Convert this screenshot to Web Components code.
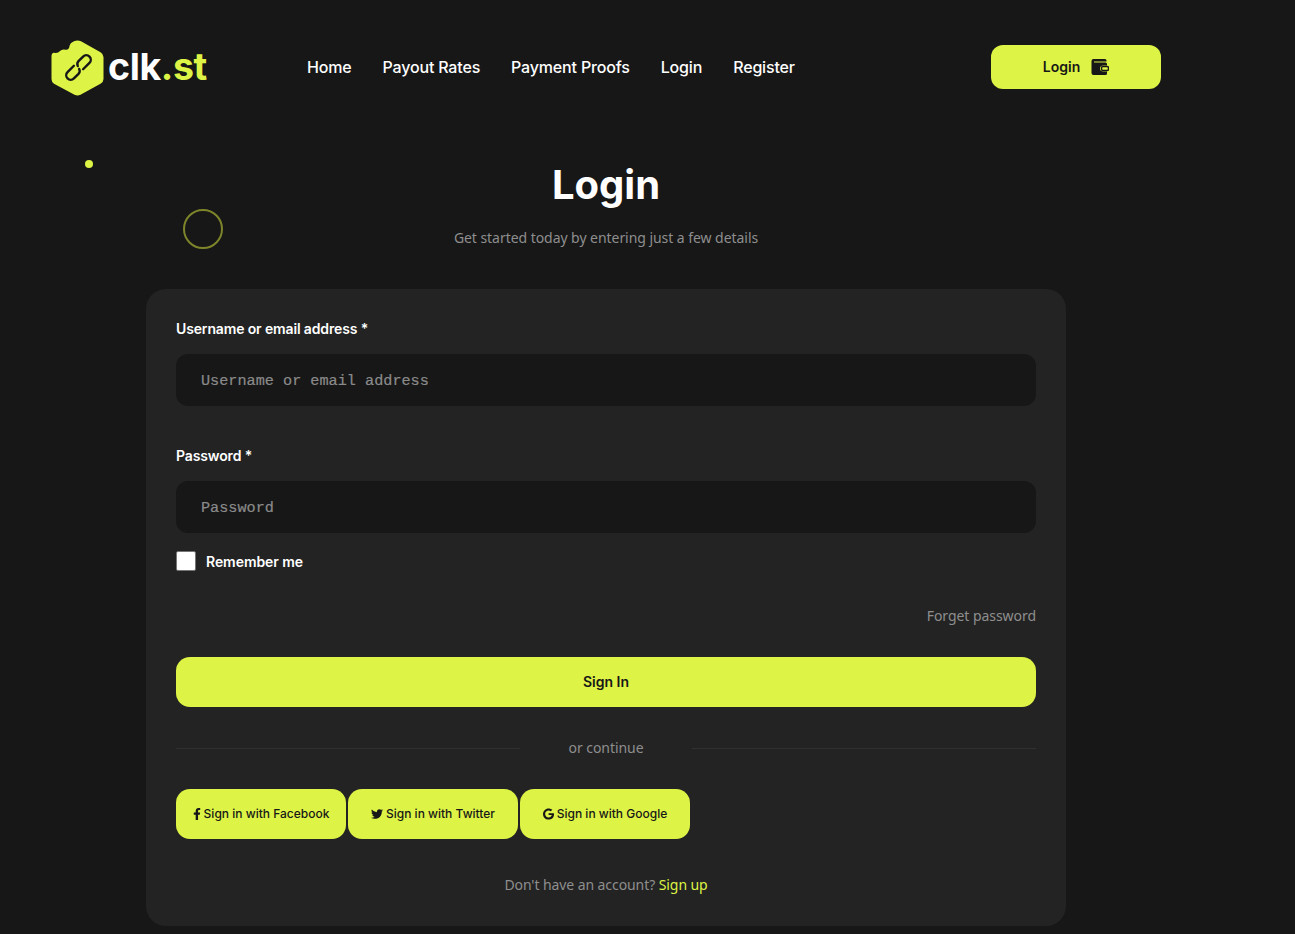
<!DOCTYPE html>
<html lang="en"><head><meta charset="utf-8"><title>Login</title>
<style>
html,body{margin:0;padding:0;background:#171717;}
body{font-family:"Inter","Noto Sans",sans-serif;color:#fff;}
</style></head>
<body>
<login-page></login-page>
<template id="t-page">
<style>
:host{display:block;position:relative;width:1212px;min-height:934px;}
.hero{display:flex;flex-direction:column;align-items:center;padding-top:24px;}
h1{margin:0;font:700 40px/54px "Inter",sans-serif;color:#fff;}
p{margin:0;padding-top:15px;font:14px/22px "Noto Sans",sans-serif;letter-spacing:-.05px;color:#8e8e8e;}
.dot{position:absolute;left:85px;top:160px;width:8px;height:8px;border-radius:50%;background:#ddf345;}
.ring{position:absolute;left:183px;top:209px;width:36px;height:36px;border:2px solid #7d8429;border-radius:50%;}
login-card{margin:40px 0 0 146px;}
</style>
<site-header></site-header>
<div class="dot"></div><div class="ring"></div>
<div class="hero"><h1>Login</h1><p>Get started today by entering just a few details</p></div>
<login-card></login-card>
</template>
<template id="t-header">
<style>
:host{display:flex;align-items:center;height:134px;box-sizing:border-box;padding:0 51px;}
.logo{display:flex;align-items:center;gap:4px;width:256px;flex:none;}
svg.mark{width:53px;height:56px;display:block;flex:none;margin-top:2px;}
.word{font:700 37.500px/56px "Inter",sans-serif;letter-spacing:-.4px;color:#fff;}
.word b{color:#ddf345;font-weight:700;}
nav{display:flex;gap:31px;flex:1;}
a{font:500 16px/22px "Inter",sans-serif;color:#fff;text-decoration:none;letter-spacing:-.17px;}
.btn{display:flex;align-items:center;justify-content:center;gap:11px;width:170px;height:44px;border-radius:12px;background:#ddf345;color:#171717;font:600 14px/20px "Inter",sans-serif;flex:none;}
.btn svg{width:18px;height:17px;display:block;}
</style>
<div class="logo">
<svg class="mark" viewBox="0 0 53 56"><path fill="#ddf345" d="M23 1.200Q26.500-.4 30 1.200L49.500 12.200Q52.500 14 52.500 17V39Q52.500 42 49.500 43.800L29.500 54.800Q26.500 56.200 23.500 54.800L3 43.800Q.5 42.300.5 39V16Q.5 13 3 12.800Q7 13.500 9 11Q11 8.800 15 9.800Q18 10 18.500 6Q19 3 23 1.200Z"/>
<g fill="none" stroke="#171717" stroke-width="2.400" stroke-linecap="round" transform="rotate(-45 27.500 27.500)"><path d="M25.500 23H16.500A4.500 4.500 0 0 0 16.500 32H23A4.500 4.500 0 0 0 27 29"/><path d="M29.500 32H38.500A4.500 4.500 0 0 0 38.500 23H32A4.500 4.500 0 0 0 28 26"/></g></svg>
<div class="word">clk<b>.st</b></div>
</div>
<nav><a>Home</a><a>Payout Rates</a><a>Payment Proofs</a><a>Login</a><a>Register</a></nav>
<div class="btn"><span>Login</span><svg viewBox="0 0 18 17"><path fill="#171717" d="M2.500 0H14Q15.500 0 15.500 1.500V2.500H3V3.500H14.500Q16 3.500 16 5V6.500H12.500Q9 6.500 9 9.500Q9 12.500 12.500 12.500H16V14.500Q16 16 14.500 16H2.500Q.5 16 .5 14V2Q.5 0 2.500 0Z"/><rect x="10.500" y="7.500" width="7" height="4" rx="1.500" fill="none" stroke="#171717" stroke-width="1.400"/></svg></div>
</template>
<template id="t-card">
<style>
:host{display:block;width:920px;height:637px;box-sizing:border-box;padding:30px;background:#232323;border-radius:20px;}
form-field+form-field{margin-top:40px;}
.check{display:flex;align-items:center;gap:10px;margin-top:18px;height:20px;font:600 14px/22px "Inter",sans-serif;letter-spacing:-.06px;color:#fff;}
.check span{padding-top:2px;}
.box{width:18px;height:18px;background:#fff;border:1px solid #767676;border-radius:2px;}
.forgot{margin-top:34px;text-align:right;font:14px/22px "Noto Sans",sans-serif;letter-spacing:-.05px;color:#8e8e8e;}
.submit{margin-top:30px;height:50px;border-radius:14px;background:#ddf345;color:#171717;display:flex;align-items:center;justify-content:center;font:600 14px/20px "Inter",sans-serif;}
.or{display:flex;align-items:center;margin-top:30px;height:22px;font:14px/22px "Noto Sans",sans-serif;letter-spacing:-.05px;color:#8e8e8e;}
.or i{flex:1;height:1px;background:#303030;}
.or span{width:172px;text-align:center;}
.social{display:flex;gap:2px;margin-top:30px;}
.signup{margin-top:35px;text-align:center;font:14px/22px "Noto Sans",sans-serif;letter-spacing:-.08px;color:#8e8e8e;}
.signup a{color:#ddf345;}
</style>
<form-field label="Username or email address *" placeholder="Username or email address"></form-field>
<form-field label="Password *" placeholder="Password"></form-field>
<div class="check"><div class="box"></div><span>Remember me</span></div>
<div class="forgot">Forget password</div>
<div class="submit">Sign In</div>
<div class="or"><i></i><span>or continue</span><i></i></div>
<div class="social">
<social-button><svg viewBox="0 0 320 512" width="8" height="12" slot="icon"><path fill="#171717" d="M279.140 288l14.220-92.660h-88.910v-60.130c0-25.350 12.420-50.060 52.240-50.060h40.420V6.260S260.430 0 225.360 0c-73.220 0-121.080 44.380-121.080 124.720v70.620H22.890V288h81.390v224h100.170V288z"/></svg>Sign in with Facebook</social-button>
<social-button><svg viewBox="0 0 512 512" width="12" height="12" slot="icon"><path fill="#171717" d="M459.370 151.716c.325 4.548.325 9.097.325 13.645 0 138.720-105.583 298.558-298.558 298.558-59.452 0-114.680-17.219-161.137-47.106 8.447.974 16.568 1.299 25.340 1.299 49.055 0 94.213-16.568 130.274-44.832-46.132-.975-84.792-31.188-98.112-72.772 6.498.974 12.995 1.624 19.818 1.624 9.421 0 18.843-1.300 27.614-3.573-48.081-9.747-84.143-51.980-84.143-102.985v-1.299c13.969 7.797 30.214 12.670 47.431 13.319-28.264-18.843-46.781-51.005-46.781-87.391 0-19.492 5.197-37.360 14.294-52.954 51.655 63.675 129.300 105.258 216.365 109.807-1.624-7.797-2.599-15.918-2.599-24.040 0-57.828 46.782-104.934 104.934-104.934 30.213 0 57.502 12.670 76.670 33.137 23.715-4.548 46.456-13.320 66.599-25.340-7.798 24.366-24.366 44.833-46.132 57.827 21.117-2.273 41.584-8.122 60.426-16.243-14.292 20.791-32.161 39.308-52.628 54.253z"/></svg>Sign in with Twitter</social-button>
<social-button><svg viewBox="0 0 488 512" width="11" height="12" slot="icon"><path fill="#171717" d="M488 261.800C488 403.300 391.100 504 248 504 110.800 504 0 393.200 0 256S110.800 8 248 8c66.800 0 123 24.500 166.300 64.900l-67.500 64.900C258.500 52.600 94.300 116.600 94.300 256c0 86.500 69.100 156.600 153.700 156.600 98.200 0 135-70.400 140.800-106.900H248v-85.300h236.100c2.300 12.700 3.900 24.900 3.900 41.400z"/></svg>Sign in with Google</social-button>
</div>
<div class="signup">Don't have an account? <a>Sign up</a></div>
</template>
<template id="t-field">
<style>
:host{display:block;}
label{display:block;height:20px;font:600 14px/20px "Inter",sans-serif;letter-spacing:-.14px;color:#fff;}
.input{margin-top:15px;height:52px;box-sizing:border-box;padding:2px 25px 0;display:flex;align-items:center;background:#171717;border-radius:12px;font:15.200px/50px "Liberation Mono",monospace;-webkit-text-stroke:.2px #8a8a8a;color:#8a8a8a;}
</style>
<label></label><div class="input"></div>
</template>
<template id="t-social">
<style>
:host{display:flex;align-items:center;justify-content:center;gap:3px;width:170px;height:50px;border-radius:14px;background:#ddf345;color:#171717;font:500 12px/16px "Inter",sans-serif;}
</style>
<slot name="icon"></slot><span><slot></slot></span>
</template>
<script>
function def(name,tpl,init){customElements.define(name,class extends HTMLElement{
  constructor(){super();this.attachShadow({mode:"open"}).appendChild(document.getElementById(tpl).content.cloneNode(true));}
  connectedCallback(){if(init)init(this);}
});}
def("login-page","t-page");
def("site-header","t-header");
def("login-card","t-card");
def("social-button","t-social");
def("form-field","t-field",el=>{
  el.shadowRoot.querySelector("label").textContent=el.getAttribute("label");
  el.shadowRoot.querySelector(".input").textContent=el.getAttribute("placeholder");
});
</script>
</body></html>
